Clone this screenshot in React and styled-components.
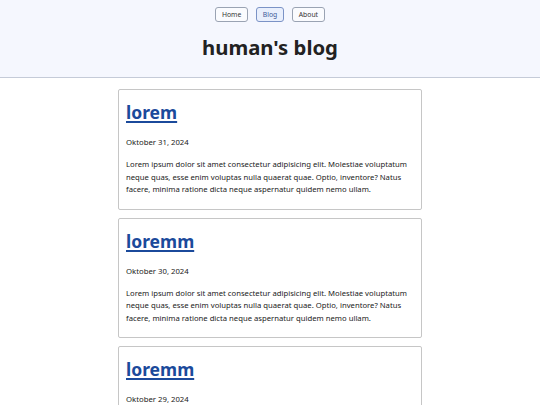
import React from "react"
import styled, { createGlobalStyle } from "styled-components"

const GlobalStyle = createGlobalStyle`
  html, body {
    margin: 0;
    padding: 0;
    background: #ffffff;
    font-family: "Noto Sans", "Open Sans", sans-serif;
    color: #222222;
  }
`

const Header = styled.header`
  height: 78px;
  box-sizing: border-box;
  background: #f5f7fe;
  border-bottom: 1px solid #c5cbd8;
  display: flex;
  flex-direction: column;
  align-items: center;
  padding-top: 7px;
`

const Nav = styled.nav`
  display: flex;
  gap: 8.5px;
`

const NavButton = styled.a`
  display: flex;
  align-items: center;
  height: 15px;
  box-sizing: border-box;
  padding: 0 5.5px;
  font-size: 6.8px;
  color: ${(p) => (p.$active ? "#3d5a98" : "#333333")};
  background: ${(p) => (p.$active ? "#e9effc" : "#fafbfe")};
  border: 1px solid ${(p) => (p.$active ? "#7b93c6" : "#9aa3b3")};
  border-radius: 3px;
  text-decoration: none;
`

const Title = styled.h1`
  margin: 10px 0 0;
  font-size: 20.3px;
  line-height: 30px;
  font-weight: 700;
  color: #222222;
`

const Main = styled.main`
  display: flex;
  flex-direction: column;
  align-items: center;
  gap: 8px;
  padding-top: 11px;
`

const Card = styled.article`
  width: 304px;
  box-sizing: border-box;
  border: 1px solid #c6c6c6;
  border-radius: 2px;
  padding: 9px 7px 13px;
`

const PostTitle = styled.a`
  display: block;
  font-size: 17.5px;
  line-height: 26px;
  font-weight: 700;
  color: #1b4a9b;
  text-decoration: underline;
  text-decoration-thickness: 2px;
  text-underline-offset: 2px;
`

const PostDate = styled.div`
  margin-top: 11px;
  font-size: 7.75px;
  line-height: 12px;
`

const PostBody = styled.p`
  margin: 10px 0 0;
  font-size: 7.7px;
  line-height: 12.5px;
`

const text =
  "Lorem ipsum dolor sit amet consectetur adipisicing elit. Molestiae voluptatum neque quas, esse enim voluptas nulla quaerat quae. Optio, inventore? Natus facere, minima ratione dicta neque aspernatur quidem nemo ullam."

const posts = [
  { title: "lorem", date: "Oktober 31, 2024" },
  { title: "loremm", date: "Oktober 30, 2024" },
  { title: "loremm", date: "Oktober 29, 2024" },
]

export default function App() {
  return (
    <>
      <GlobalStyle />
      <Header>
        <Nav>
          <NavButton href="#">Home</NavButton>
          <NavButton href="#" $active>Blog</NavButton>
          <NavButton href="#">About</NavButton>
        </Nav>
        <Title>human's blog</Title>
      </Header>
      <Main>
        {posts.map((post, i) => (
          <Card key={i}>
            <PostTitle href="#">{post.title}</PostTitle>
            <PostDate>{post.date}</PostDate>
            <PostBody>{text}</PostBody>
          </Card>
        ))}
      </Main>
    </>
  )
}
